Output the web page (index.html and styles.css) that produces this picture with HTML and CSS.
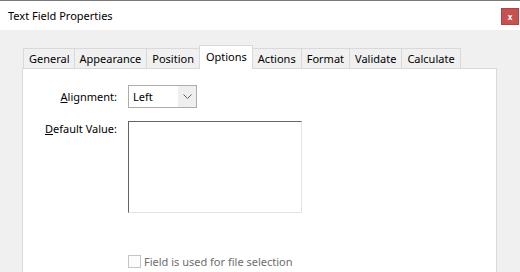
FILE: index.html
```html
<!DOCTYPE html>
<html lang="en">
<head>
    <meta charset="UTF-8">
    <title>Text Field Properties</title>
    <link rel="stylesheet" href="styles.css">
</head>
<body>

    <div class="window">
        <div class="titlebar">
            <span class="title">Text Field Properties</span>
            <button class="close-btn">x</button>
        </div>

        <div class="content">
            <div class="tabs">
                <div class="tab">General</div>
                <div class="tab">Appearance</div>
                <div class="tab">Position</div>
                <div class="tab active">Options</div>
                <div class="tab">Actions</div>
                <div class="tab">Format</div>
                <div class="tab">Validate</div>
                <div class="tab">Calculate</div>
            </div>

            <div class="panel">
                <div class="form-row">
                    <label class="form-label"><u>A</u>lignment:</label>
                    <div class="select">
                        <span class="select-value">Left</span>
                        <span class="select-arrow">
                            <svg width="9" height="5" viewBox="0 0 9 5"><path d="M0.5 0.5 L4.5 4.5 L8.5 0.5" fill="none" stroke="#606060" stroke-width="1"/></svg>
                        </span>
                    </div>
                </div>

                <div class="form-row top">
                    <label class="form-label"><u>D</u>efault Value:</label>
                    <div class="textbox"></div>
                </div>

                <div class="checkbox-row">
                    <span class="checkbox"></span>
                    <span class="checkbox-label">Field is used for file selection</span>
                </div>
            </div>
        </div>
    </div>

</body>
</html>
```

FILE: styles.css
```css
body {
    margin: 0;
    padding: 0;
    background: #f0f0f0;
    font-family: 'Noto Sans', sans-serif;
    font-size: 11px;
    color: #000;
    height: 272px;
    overflow: hidden;
}

.window {
    display: flex;
    flex-direction: column;
    height: 100%;
}

.titlebar {
    display: flex;
    justify-content: space-between;
    align-items: flex-start;
    height: 29px;
    background: #fff;
    border-top: 1px solid #7a7a7a;
}

.title {
    margin: 7px 0 0 8px;
    font-size: 11px;
}

.close-btn {
    margin: 7px 1px 0 0;
    width: 18px;
    height: 17px;
    padding: 0;
    border: 1px solid #b04444;
    background: #c75050;
    color: #fff;
    font-family: 'Noto Sans', sans-serif;
    font-size: 8px;
    font-weight: bold;
    line-height: 13px;
}

.content {
    flex: 1;
    display: flex;
    flex-direction: column;
    padding: 15px 23px 0 22px;
}

.tabs {
    display: flex;
    align-items: flex-end;
    height: 23px;
    padding-left: 1px;
}

.tab {
    height: 19px;
    line-height: 20px;
    padding: 0 5px;
    border: 1px solid #d9d9d9;
    border-bottom: none;
    margin-left: -1px;
    background: #f0f0f0;
}

.tab:first-child {
    margin-left: 0;
    padding: 0 4px 0 5px;
}

.tab.active {
    height: 23px;
    line-height: 21px;
    background: #fff;
    position: relative;
    z-index: 1;
    margin-bottom: -1px;
    padding: 0 5px 0 6px;
}

.panel {
    flex: 1;
    background: #fff;
    border: 1px solid #d9d9d9;
    border-bottom: none;
    padding-top: 16px;
}

.form-row {
    display: flex;
    align-items: center;
    gap: 11px;
    margin-bottom: 13px;
}

.form-row.top {
    align-items: flex-start;
}

.form-label {
    width: 94px;
    text-align: right;
}

.select {
    display: flex;
    width: 67px;
    height: 21px;
    border: 1px solid #acacac;
    background: #fff;
}

.select-value {
    flex: 1;
    line-height: 21px;
    padding-left: 4px;
}

.select-arrow {
    width: 18px;
    background: #efefef;
    display: flex;
    align-items: center;
    justify-content: center;
}

.textbox {
    width: 172px;
    height: 90px;
    background: #fff;
    border-top: 1px solid #646464;
    border-left: 1px solid #646464;
    border-right: 1px solid #e3e3e3;
    border-bottom: 1px solid #e3e3e3;
}

.checkbox-row {
    display: flex;
    align-items: center;
    gap: 3px;
    margin: 41px 0 0 105px;
}

.checkbox {
    width: 11px;
    height: 11px;
    border: 1px solid #c5c5c5;
    background: #fcfcfc;
}

.checkbox-label {
    color: #6d6d6d;
}
```
